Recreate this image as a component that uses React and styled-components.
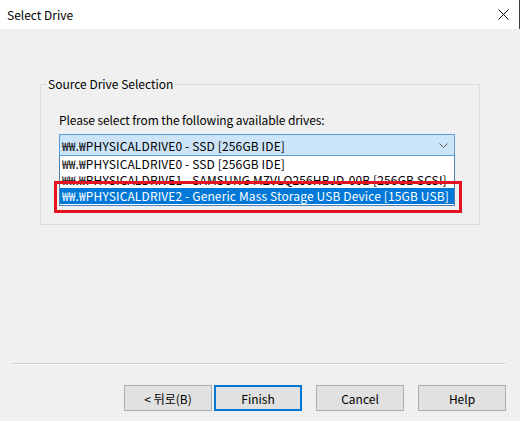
import React from "react";
import styled, { createGlobalStyle } from "styled-components";

const Global = createGlobalStyle`
  html, body { margin: 0; padding: 0; background: #f0f0f0; }
  body { font-family: "Noto Sans CJK KR", "Noto Sans", sans-serif; font-size: 12px; color: #000; }
`;

const Window = styled.div`
  width: 520px;
  height: 421px;
  display: flex;
  flex-direction: column;
  background: #f0f0f0;
  box-sizing: border-box;
`;

const TitleBar = styled.div`
  height: 29px;
  flex: none;
  background: #fff;
  display: flex;
  align-items: center;
  justify-content: space-between;
  padding: 0 10px 0 7px;
  border-right: 1px solid #3c3c3c;
  box-sizing: border-box;
`;

const Title = styled.span`
  font-size: 12px;
`;

const Body = styled.div`
  flex: 1;
  display: flex;
  flex-direction: column;
  padding: 48px 0 10px 0;
`;

const Group = styled.fieldset`
  margin: 0 40px 0 40px;
  padding: 11px 18px 0 18px;
  height: 148px;
  box-sizing: border-box;
  border: 1px solid #dcdcdc;
  min-width: 0;
`;

const Legend = styled.legend`
  margin-left: -13px;
  padding: 0 2px;
  font-size: 12px;
  line-height: 14px;
`;

const Prompt = styled.div`
  font-size: 12px;
  line-height: 16px;
  letter-spacing: -0.1px;
  margin: 10px 0 6px 0;
`;

const ComboWrap = styled.div`
  position: relative;
  width: 396px;
`;

const Combo = styled.div`
  height: 22px;
  box-sizing: border-box;
  background: #cce4f7;
  border: 1px solid #5a9fdc;
  display: flex;
  align-items: center;
  justify-content: space-between;
  padding: 0 6px 0 2px;
  font-size: 12px;
  letter-spacing: 0.13px;
`;

const List = styled.div`
  border: 1px solid #4f7fb0;
  border-top: none;
  background: #fff;
  padding-bottom: 1px;
`;

const Item = styled.div`
  height: 16px;
  line-height: 16px;
  padding: 0 2px;
  white-space: nowrap;
  overflow: hidden;
  font-size: 12px;
  letter-spacing: 0.13px;
  background: ${(p) => (p.$selected ? "#0078d7" : "transparent")};
  color: ${(p) => (p.$selected ? "#fff" : "#000")};
`;

const Highlight = styled.div`
  position: absolute;
  left: -5px;
  top: 47px;
  width: 408px;
  height: 32px;
  box-sizing: border-box;
  border: 3px solid #e3131f;
  pointer-events: none;
`;

const Footer = styled.div`
  margin-top: auto;
  display: flex;
  flex-direction: column;
`;

const Separator = styled.div`
  margin: 0 14px 0 11px;
  height: 1px;
  background: #d2d2d2;
  border-bottom: 1px solid #fafafa;
`;

const ButtonRow = styled.div`
  display: flex;
  justify-content: flex-end;
  padding: 20px 14px 0 0;
  gap: 14px;
`;

const Pair = styled.div`
  display: flex;
  gap: 2px;
`;

const Button = styled.button`
  width: 88px;
  height: 26px;
  box-sizing: border-box;
  background: #e1e1e1;
  border: ${(p) => (p.$default ? "2px solid #0078d7" : "1px solid #adadad")};
  font-family: "Noto Sans CJK KR", "Noto Sans", sans-serif;
  font-size: 12px;
  color: #000;
  padding: 0;
  margin: 0;
`;

const Chevron = () => (
  <svg width="9" height="5" viewBox="0 0 9 5">
    <path d="M0.5 0.5 L4.5 4.5 L8.5 0.5" fill="none" stroke="#606060" strokeWidth="1" />
  </svg>
);

const CloseIcon = () => (
  <svg width="11" height="11" viewBox="0 0 11 11">
    <path d="M0.5 0.5 L10.5 10.5 M10.5 0.5 L0.5 10.5" stroke="#000" strokeWidth="1" fill="none" />
  </svg>
);

const drives = [
  "₩₩.₩PHYSICALDRIVE0 - SSD [256GB IDE]",
  "₩₩.₩PHYSICALDRIVE1 - SAMSUNG MZVLQ256HBJD-00B [256GB SCSI]",
  "₩₩.₩PHYSICALDRIVE2 - Generic Mass Storage USB Device [15GB USB]",
];

export default function App() {
  return (
    <>
      <Global />
      <Window>
        <TitleBar>
          <Title>Select Drive</Title>
          <CloseIcon />
        </TitleBar>
        <Body>
          <Group>
            <Legend>Source Drive Selection</Legend>
            <Prompt>Please select from the following available drives:</Prompt>
            <ComboWrap>
              <Combo>
                <span>{drives[0]}</span>
                <Chevron />
              </Combo>
              <List>
                {drives.map((d, i) => (
                  <Item key={d} $selected={i === 2}>{d}</Item>
                ))}
              </List>
              <Highlight />
            </ComboWrap>
          </Group>
          <Footer>
            <Separator />
            <ButtonRow>
              <Pair>
                <Button>&lt; 뒤로(B)</Button>
                <Button $default>Finish</Button>
              </Pair>
              <Button>Cancel</Button>
              <Button>Help</Button>
            </ButtonRow>
          </Footer>
        </Body>
      </Window>
    </>
  );
}
